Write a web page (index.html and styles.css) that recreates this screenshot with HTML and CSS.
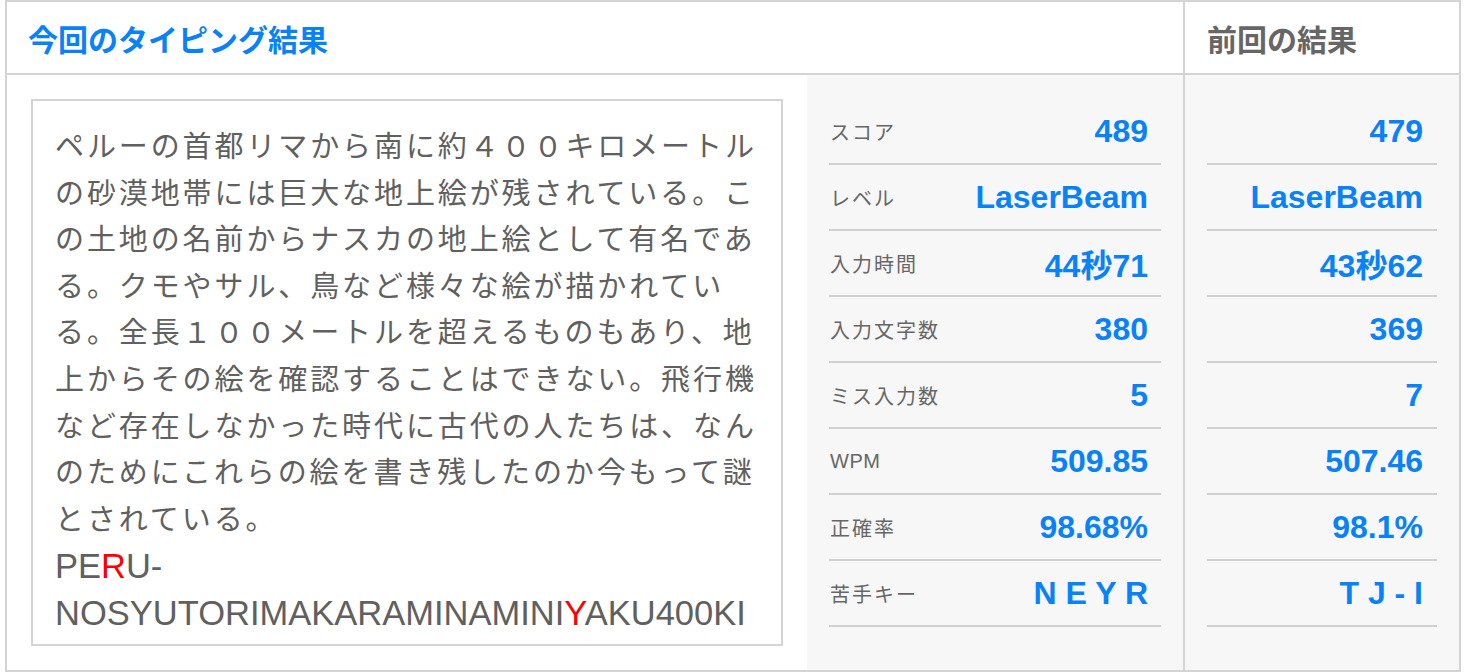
FILE: index.html
```html
<!DOCTYPE html>
<html lang="ja">
<head>
<meta charset="utf-8">
<title>タイピング結果</title>
<link rel="stylesheet" href="styles.css">
</head>
<body>
<div class="board">
  <div class="head head-current">今回のタイピング結果</div>
  <div class="head head-prev">前回の結果</div>
  <div class="current">
    <div class="text-area">
      <div class="text-box">
        <p class="jp">ペルーの首都リマから南に約４００キロメートルの砂漠地帯には巨大な地上絵が残されている。この土地の名前からナスカの地上絵として有名である。クモやサル、鳥など様々な絵が描かれている。全長１００メートルを超えるものもあり、地上からその絵を確認することはできない。飛行機など存在しなかった時代に古代の人たちは、なんのためにこれらの絵を書き残したのか今もって謎とされている。</p>
        <p class="romaji">PE<span class="miss">R</span>U-NOSYUTORIMAKARAMINAMINI<span class="miss">Y</span>AKU400KI</p>
      </div>
    </div>
    <div class="stats">
      <div class="row"><span class="label">スコア</span><span class="value">489</span></div>
      <div class="row"><span class="label">レベル</span><span class="value">LaserBeam</span></div>
      <div class="row"><span class="label">入力時間</span><span class="value">44秒71</span></div>
      <div class="row"><span class="label">入力文字数</span><span class="value">380</span></div>
      <div class="row"><span class="label">ミス入力数</span><span class="value">5</span></div>
      <div class="row"><span class="label label-latin">WPM</span><span class="value">509.85</span></div>
      <div class="row"><span class="label">正確率</span><span class="value">98.68%</span></div>
      <div class="row"><span class="label">苦手キー</span><span class="value">N E Y R</span></div>
    </div>
  </div>
  <div class="prev">
    <div class="row row-prev"><span class="value">479</span></div>
    <div class="row row-prev"><span class="value">LaserBeam</span></div>
    <div class="row row-prev"><span class="value">43秒62</span></div>
    <div class="row row-prev"><span class="value">369</span></div>
    <div class="row row-prev"><span class="value">7</span></div>
    <div class="row row-prev"><span class="value">507.46</span></div>
    <div class="row row-prev"><span class="value">98.1%</span></div>
    <div class="row row-prev"><span class="value">T J - I</span></div>
  </div>
</div>
</body>
</html>
```

FILE: styles.css
```css
html, body {
  margin: 0;
  padding: 0;
  background: #fff;
}

body {
  font-family: "Liberation Sans", "Noto Sans CJK JP", sans-serif;
  color: #666;
  overflow: hidden;
}

.board {
  box-sizing: border-box;
  width: 1456px;
  height: 672px;
  margin-left: 5px;
  padding: 2px;
  display: grid;
  grid-template-columns: 1176px 274px;
  grid-template-rows: 71px 595px;
  gap: 2px;
  background: #d4d4d4;
}

.head {
  background: #fff;
  display: flex;
  align-items: center;
  font-family: "Noto Sans CJK JP", sans-serif;
  font-weight: 700;
  font-size: 30px;
}

.head-current {
  padding-left: 21px;
  color: #0a82f7;
}

.head-prev {
  padding-left: 22px;
  color: #666;
}

.current {
  display: flex;
  background: #fff;
}

.text-area {
  box-sizing: border-box;
  width: 800px;
  padding: 24px;
}

.text-box {
  box-sizing: border-box;
  height: 100%;
  border: 2px solid #d4d4d4;
  padding: 23px 22px 10px;
  overflow: hidden;
  font-size: 29px;
  line-height: 46.6px;
  color: #606060;
}

.text-box p {
  margin: 0;
}

.jp {
  letter-spacing: 0.1em;
}

.romaji {
  font-size: 34.5px;
  letter-spacing: 0;
}

.miss {
  color: #ff0000;
}

.stats {
  flex: 1;
  background: #f7f7f7;
  padding: 24px 22px 22px;
}

.prev {
  background: #f7f7f7;
  padding: 24px 22px 22px;
}

.row {
  box-sizing: content-box;
  height: 64px;
  border-bottom: 2px solid #d0d0d0;
  display: flex;
  align-items: center;
  justify-content: space-between;
  padding: 0 13px 0 1px;
}

.row-prev {
  justify-content: flex-end;
  padding-right: 14px;
}

.label {
  font-size: 20px;
  letter-spacing: 2px;
  color: #666;
}

.label-latin {
  letter-spacing: 0.5px;
}

.value {
  font-size: 32px;
  font-weight: 700;
  color: #0a82f7;
  white-space: pre;
}
```
